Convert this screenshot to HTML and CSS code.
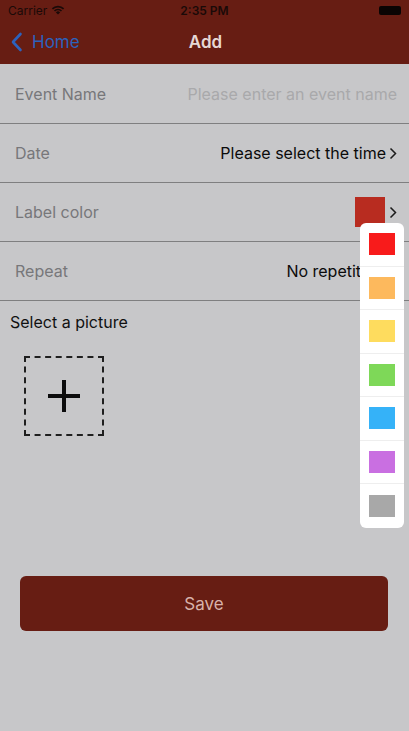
FILE: index.html
```html
<!DOCTYPE html>
<html lang="en">
<head>
    <meta charset="UTF-8">
    <meta name="viewport" content="width=device-width, initial-scale=1.0">
    <title>Add</title>
    <link rel="stylesheet" href="styles.css">
</head>
<body>
    <!-- Status bar -->
    <div class="status-bar">
        <div class="status-left">
            <span>Carrier</span>
            <svg class="wifi" width="14" height="10" viewBox="0 0 14 10">
                <path d="M7 9.6 L4.9 7.4 A3 3 0 0 1 9.1 7.4 Z" fill="#1a0a08"/>
                <path d="M2.9 5.4 A5.8 5.8 0 0 1 11.1 5.4 L9.9 6.6 A4.1 4.1 0 0 0 4.1 6.6 Z" fill="#1a0a08"/>
                <path d="M0.8 3.3 A8.8 8.8 0 0 1 13.2 3.3 L12 4.5 A7.1 7.1 0 0 0 2 4.5 Z" fill="#1a0a08"/>
            </svg>
        </div>
        <div class="status-time">2:35 PM</div>
        <div class="status-right">
            <div class="battery"></div>
        </div>
    </div>

    <!-- Navigation -->
    <div class="nav-bar">
        <div class="nav-back">
            <svg width="13" height="20" viewBox="0 0 13 20">
                <path d="M10.5 2 L3 10 L10.5 18" fill="none" stroke="#2c62bd" stroke-width="2.6" stroke-linecap="round" stroke-linejoin="round"/>
            </svg>
            <span>Home</span>
        </div>
        <div class="nav-title">Add</div>
        <div class="nav-spacer"></div>
    </div>

    <!-- Form -->
    <div class="form">
        <div class="form-row">
            <span class="form-label">Event Name</span>
            <span class="form-placeholder">Please enter an event name</span>
        </div>
        <div class="form-row">
            <span class="form-label">Date</span>
            <span class="form-value">Please select the time
                <svg class="chevron" width="8" height="13" viewBox="0 0 8 13">
                    <path d="M1.5 1.5 L6.5 6.5 L1.5 11.5" fill="none" stroke="#1b1b1b" stroke-width="1.5"/>
                </svg>
            </span>
        </div>
        <div class="form-row">
            <span class="form-label">Label color</span>
            <span class="form-value">
                <span class="color-box"></span>
                <svg class="chevron" width="8" height="13" viewBox="0 0 8 13">
                    <path d="M1.5 1.5 L6.5 6.5 L1.5 11.5" fill="none" stroke="#1b1b1b" stroke-width="1.5"/>
                </svg>
            </span>
        </div>
        <div class="form-row">
            <span class="form-label">Repeat</span>
            <span class="form-value repeat-value">No repetition</span>
        </div>
    </div>

    <div class="picture">
        <div class="picture-title">Select a picture</div>
        <div class="picture-box">
            <div class="plus"></div>
        </div>
    </div>

    <div class="actions">
        <button class="save-btn">Save</button>
    </div>

    <!-- Color picker popup -->
    <div class="color-menu">
        <div class="color-item"><span class="swatch" style="background:#f81b1b"></span></div>
        <div class="color-item"><span class="swatch" style="background:#fdb95d"></span></div>
        <div class="color-item"><span class="swatch" style="background:#fedc5e"></span></div>
        <div class="color-item"><span class="swatch" style="background:#7ed858"></span></div>
        <div class="color-item"><span class="swatch" style="background:#35b2f8"></span></div>
        <div class="color-item"><span class="swatch" style="background:#c96fe1"></span></div>
        <div class="color-item"><span class="swatch" style="background:#a8a8a8"></span></div>
    </div>
</body>
</html>
```

FILE: styles.css
```css
/* General */
* {
    margin: 0;
    padding: 0;
    box-sizing: border-box;
    font-family: Inter, "Liberation Sans", sans-serif;
}

body {
    background-color: #c7c7c9;
    width: 409px;
    height: 731px;
    position: relative;
    overflow: hidden;
}

/* Status bar */
.status-bar {
    height: 20px;
    background-color: #671d13;
    display: flex;
    align-items: center;
    justify-content: space-between;
    padding: 0 8px;
    font-size: 12px;
    color: #1a0a08;
}

.status-left,
.status-right {
    width: 80px;
    display: flex;
    align-items: center;
    gap: 4px;
}

.status-right {
    justify-content: flex-end;
}

.status-time {
    font-weight: 600;
}

.battery {
    width: 22px;
    height: 9px;
    border-radius: 2px;
    background-color: #0a0403;
}

/* Navigation */
.nav-bar {
    height: 44px;
    background-color: #671d13;
    display: flex;
    align-items: center;
    justify-content: space-between;
    padding: 0 8px 0 10px;
}

.nav-back,
.nav-spacer {
    width: 90px;
}

.nav-back {
    display: flex;
    align-items: center;
    gap: 9px;
    color: #2c62bd;
    font-size: 17px;
}

.nav-title {
    color: #e6d8d5;
    font-size: 17px;
    font-weight: 600;
}

/* Form */
.form {
    padding-top: 1px;
}

.form-row {
    height: 59px;
    display: flex;
    align-items: center;
    justify-content: space-between;
    padding: 0 12px 0 15px;
    border-bottom: 1px solid #7f7f80;
}

.form-label {
    font-size: 16px;
    color: #77777a;
}

.form-placeholder {
    font-size: 16px;
    color: #a9a9ab;
}

.form-value {
    display: flex;
    align-items: center;
    gap: 3px;
    font-size: 16px;
    color: #0b0b0b;
}

.chevron {
    display: block;
}

.color-box {
    width: 30px;
    height: 30px;
    margin-right: 1px;
    background-color: #b82c20;
}

.repeat-value {
    margin-right: 13px;
}

/* Picture */
.picture {
    padding: 11px 10px 0;
}

.picture-title {
    font-size: 16px;
    color: #111;
}

.picture-box {
    width: 80px;
    height: 80px;
    margin: 24px 0 0 14px;
    border: 2px dashed #1e1e1e;
    display: flex;
    align-items: center;
    justify-content: center;
}

.plus {
    width: 32px;
    height: 32px;
    position: relative;
}

.plus::before,
.plus::after {
    content: "";
    position: absolute;
    background-color: #0c0c0c;
}

.plus::before {
    left: 0;
    top: 14px;
    width: 32px;
    height: 4px;
}

.plus::after {
    top: 0;
    left: 14px;
    width: 4px;
    height: 32px;
}

/* Save */
.actions {
    padding: 140px 21px 0 20px;
}

.save-btn {
    width: 100%;
    height: 55px;
    border: none;
    border-radius: 6px;
    background-color: #671d13;
    color: #d8b2aa;
    font-size: 17px;
}

/* Color menu */
.color-menu {
    position: absolute;
    left: 360px;
    top: 223px;
    width: 44px;
    background-color: #ffffff;
    border-radius: 6px;
}

.color-item {
    height: 43.5px;
    display: flex;
    align-items: center;
    justify-content: center;
    border-bottom: 1px solid #eeeeee;
}

.color-item:last-child {
    border-bottom: none;
}

.swatch {
    width: 26px;
    height: 22px;
}
```
